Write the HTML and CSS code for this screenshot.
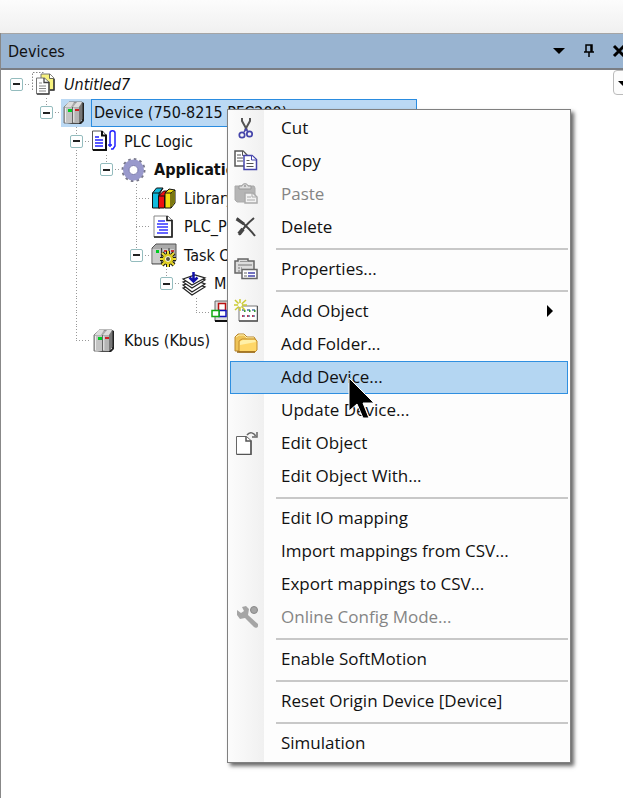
FILE: index.html
```html
<!DOCTYPE html>
<html lang="en">
<head>
  <meta charset="UTF-8">
  <meta name="viewport" content="width=device-width, initial-scale=1.0">
  <title>Devices</title>
  <link rel="stylesheet" href="styles.css">
</head>
<body>
  <!-- Shared icon shapes -->
  <svg class="defs" aria-hidden="true">
    <symbol id="plc" viewBox="0 0 26 26">
      <path d="M6 24h14l3-3V3l-2-1v19z" fill="#222"/>
      <path d="M3 7l5-5h13v17l-3 4H3z" fill="#aaa" stroke="#777"/>
      <path d="M3.500 7l4-5h5.500l-3 5zM12 7l4-5h5l-3 5z" fill="#ddd"/>
      <path d="M4 7.500h7V23H4z" fill="#c4c4c4"/>
      <path d="M12 7.500h6V23h-6z" fill="#b5b5b5"/>
      <path d="M18 7l3-4v16l-3 4z" fill="#777"/>
      <path d="M11.500 7v16" stroke="#666"/>
      <path d="M4.500 8v14M12.800 8v14" stroke="#eee"/>
      <path d="M7 9h4v3H7z" fill="#0c2"/>
      <path d="M14 9h4v2h-4z" fill="#c22"/>
    </symbol>
  </svg>

  <div class="toolbar"></div>

  <section class="panel">
    <header class="panel-header">
      <h2>Devices</h2>
      <button class="tool" aria-label="Window position">
        <svg width="14" height="8" viewBox="0 0 14 8"><path d="M1 1h12L7 7z"/></svg>
      </button>
      <button class="tool" aria-label="Auto hide">
        <svg width="12" height="16" viewBox="0 0 12 16"><path d="M3 9V2h6v7M1 9h10M6 9v5M8 2v7" fill="none" stroke="#000" stroke-width="1.500"/></svg>
      </button>
      <button class="tool" aria-label="Close">
        <svg width="14" height="14" viewBox="0 0 14 14"><path d="M2 2l10 10M12 2L2 12" stroke="#000" stroke-width="3"/></svg>
      </button>
    </header>

    <div class="panel-body">
      <ul class="tree">
        <li class="row">
          <span class="cell branch"><button class="expander" aria-label="Collapse"></button></span>
          <svg class="icon" viewBox="0 0 26 26">
            <path d="M1.500 19V1.500h11" fill="none" stroke="#888" stroke-dasharray="1.500 1.500"/>
            <path d="M10 3h9l4 4v12H10z" fill="#f7f27e" stroke="#777"/>
            <path d="M18.500 3v4.500H23" fill="#fff" stroke="#665"/>
            <path d="M23 8v11h-4" fill="none" stroke="#333" stroke-width="1.500"/>
            <path d="M5.500 7h8l4.500 4v12H5.500z" fill="#fff" stroke="#777"/>
            <path d="M13 7v4.500h5v11.500H6" fill="none" stroke="#444" stroke-width="1.300"/>
            <path d="M8 12h3M8 15h7M8 17.500h7M8 20h7" stroke="#888"/>
          </svg>
          <span class="label"><em>Untitled7</em></span>
        </li>
        <li class="row">
          <span class="cell"></span>
          <span class="cell up branch"><button class="expander" aria-label="Collapse"></button></span>
          <svg class="icon selected-icon"><use href="#plc"/></svg>
          <span class="label selected">Device (750-8215 PFC200)</span>
        </li>
        <li class="row">
          <span class="cell"></span><span class="cell"></span>
          <span class="cell up down branch"><button class="expander" aria-label="Collapse"></button></span>
          <svg class="icon" viewBox="0 0 26 26">
            <path d="M1.500 3h10l3.500 4v15H1.500z" fill="#fff" stroke="#555"/>
            <path d="M11 3v4.500h4V22H2" fill="none" stroke="#111" stroke-width="2"/>
            <path d="M4 9h4M4 12h8M4 15h8M4 18h8" stroke="#22f" stroke-width="1.500"/>
            <path d="M19 17V5c0-3 5-3 5 0v13l-2 3h-2M17 17h4M19 15v4" fill="none" stroke="#22f" stroke-width="1.500"/>
          </svg>
          <span class="label">PLC Logic</span>
        </li>
        <li class="row">
          <span class="cell"></span><span class="cell"></span><span class="cell up down"></span>
          <span class="cell up branch"><button class="expander" aria-label="Collapse"></button></span>
          <svg class="icon" viewBox="0 0 26 26">
            <circle cx="12.500" cy="13" r="10.500" fill="none" stroke="#778" stroke-width="3" stroke-dasharray="2.500 2.998"/>
            <circle cx="12.500" cy="13" r="7.500" fill="none" stroke="#99c" stroke-width="6"/>
            <circle cx="12.500" cy="13" r="4.500" fill="#fff" stroke="#77a"/>
          </svg>
          <span class="label"><strong>Application</strong></span>
        </li>
        <li class="row">
          <span class="cell"></span><span class="cell"></span><span class="cell up down"></span><span class="cell"></span>
          <span class="cell up down branch"></span>
          <svg class="icon" viewBox="0 0 26 26">
            <path d="M1.500 8l4-5H12l-3 5v15H1.500z" fill="#1bd" stroke="#111"/>
            <path d="M1.500 8H8l4-5M8 8v15" fill="none" stroke="#111"/>
            <path d="M7.500 11l5-5h4l-3 5v12h-6z" fill="#e11" stroke="#111"/>
            <path d="M7.500 11h6v12" fill="none" stroke="#111"/>
            <path d="M14 8l4-4 6 1v13l-4 5h-6z" fill="#ed1" stroke="#111"/>
            <path d="M14 8h6l4-3M20 8v15" fill="none" stroke="#111"/>
            <path d="M21 8l2-2v12l-2 3z" fill="#771"/>
          </svg>
          <span class="label">Library Manager</span>
        </li>
        <li class="row">
          <span class="cell"></span><span class="cell"></span><span class="cell up down"></span><span class="cell"></span>
          <span class="cell up down branch"></span>
          <svg class="icon" viewBox="0 0 26 26">
            <path d="M3 2h14l4 4v17H3z" fill="#fff" stroke="#888"/>
            <path d="M16 2v4.500h5V23H3" fill="none" stroke="#222" stroke-width="1.700"/>
            <path d="M7 7h7M6 10h11M6 13h11M8 16h9M6 19h11" stroke="#33f" stroke-width="1.500"/>
          </svg>
          <span class="label">PLC_PRG (PRG)</span>
        </li>
        <li class="row">
          <span class="cell"></span><span class="cell"></span><span class="cell up down"></span><span class="cell"></span>
          <span class="cell up branch"><button class="expander" aria-label="Collapse"></button></span>
          <svg class="icon" viewBox="0 0 26 26">
            <path d="M1 6l4-4h20v16l-3 4H1z" fill="#aaa" stroke="#555"/>
            <path d="M1.500 7h8v14h-8zM12 7h5v10h-5zM19 7h4v10h-4z" fill="#ccc"/>
            <path d="M10.500 6v15M18 6v6" stroke="#444"/>
            <path d="M5 8h3v3H5z" fill="#0c2"/>
            <path d="M13 8h3v2h-3zM20 8h3v2h-3z" fill="#c33"/>
            <path d="M17 9v16M9 17h16M11 11l12 12M23 11L11 23" stroke="#221" stroke-width="4"/>
            <path d="M17 9v16M9 17h16M11 11l12 12M23 11L11 23" stroke="#ed3" stroke-width="2"/>
            <circle cx="17" cy="17" r="4" fill="#fff" stroke="#dc2" stroke-width="2.500"/>
            <circle cx="17" cy="17" r="2" fill="#554"/>
          </svg>
          <span class="label">Task Configuration</span>
        </li>
        <li class="row">
          <span class="cell"></span><span class="cell"></span><span class="cell up down"></span><span class="cell"></span><span class="cell"></span>
          <span class="cell up branch"><button class="expander" aria-label="Collapse"></button></span>
          <svg class="icon" viewBox="0 0 26 26">
            <g fill="#fff" stroke="#222" stroke-width="1.200">
              <path d="M2 17l14-4 8 3-13 8z"/>
              <path d="M2 14l14-4 8 3-13 8z"/>
              <path d="M2 11l14-5 8 3-13 8z"/>
              <path d="M2 8l12-4 10 3-13 7z"/>
            </g>
            <path d="M12.500 1v9M8.500 6.500l4 4 4-4" fill="none" stroke="#11a" stroke-width="2.500"/>
          </svg>
          <span class="label">MainTask</span>
        </li>
        <li class="row">
          <span class="cell"></span><span class="cell"></span><span class="cell up down"></span><span class="cell"></span><span class="cell"></span><span class="cell"></span>
          <span class="cell up branch"></span>
          <svg class="icon" viewBox="0 0 26 26">
            <path d="M4 2h20v20H4z" fill="#ddd" stroke="#666"/>
            <path d="M4 22h20" stroke="#111" stroke-width="2"/>
            <path d="M7.500 4.500h7v7h-7z" fill="#fff" stroke="#b11" stroke-width="1.500"/>
            <path d="M8 11.500h7v6H8z" fill="#fff" stroke="#11b" stroke-width="1.500"/>
            <path d="M1 11.500h7v6H1z" fill="#fff" stroke="#1a1" stroke-width="1.500"/>
          </svg>
          <span class="label">PLC_PRG</span>
        </li>
        <li class="row">
          <span class="cell"></span><span class="cell"></span>
          <span class="cell up branch"></span>
          <svg class="icon"><use href="#plc"/></svg>
          <span class="label">Kbus (Kbus)</span>
        </li>
      </ul>
      <button class="filter" aria-label="Filter">
        <svg width="12" height="8" viewBox="0 0 12 8"><path d="M0 1h12L6 7z"/></svg>
      </button>
    </div>
  </section>

  <!-- Context menu -->
  <menu class="context-menu">
    <li><button class="item">
      <svg viewBox="0 0 24 24" fill="none">
        <path d="M8 2v3l5 9M16 2v3l-5 9" stroke="#555" stroke-width="2"/>
        <circle cx="8" cy="19" r="2.700" stroke="#44a" stroke-width="1.700"/>
        <circle cx="15.500" cy="18" r="2.700" stroke="#44a" stroke-width="1.700"/>
        <path d="M10 16l2-3 2 3" stroke="#44a" stroke-width="1.500"/>
      </svg>Cut</button></li>
    <li><button class="item">
      <svg viewBox="0 0 24 24" fill="#fff">
        <path d="M1 2h8l4 4v11H1z" stroke="#555" stroke-width="1.500"/>
        <path d="M8.500 2v4.500H12M3 6h4M3 9h6M3 12h6" stroke="#555"/>
        <path d="M10 6.500h8l4.500 4v10H10z" stroke="#44a" stroke-width="1.500"/>
        <path d="M17.500 6.500V11H22" stroke="#44a"/>
        <path d="M12.500 11.500h3M12.500 14.500h7M12.500 17.500h7" stroke="#555"/>
      </svg>Copy</button></li>
    <li><button class="item" disabled>
      <svg viewBox="0 0 24 24">
        <path d="M1 4h19l1 2v14H3l-2-2z" fill="#b5b5b5" stroke="#aaa"/>
        <path d="M5 7V4h3c0-3 6-3 6 0h3v3z" fill="#ddd" stroke="#999"/>
        <circle cx="11" cy="4" r="1" fill="#999"/>
        <path d="M11 11h8l4 4v6H11z" fill="#f2f2f2" stroke="#aaa" stroke-width="1.500"/>
        <path d="M13 15h4M13 18h8M18 11v4h4" fill="none" stroke="#aaa"/>
      </svg>Paste</button></li>
    <li><button class="item">
      <svg viewBox="0 0 24 24" fill="none" stroke="#444">
        <path d="M3 3c7 6 12 10 18 18" stroke-width="2"/>
        <path d="M2.500 4L10 9" stroke-width="3"/>
        <path d="M20 3C14 8 9 13 5 20" stroke-width="2"/>
        <path d="M9 14l-4 5" stroke-width="4"/>
      </svg>Delete</button></li>
    <li class="separator"></li>
    <li><button class="item">
      <svg viewBox="0 0 24 24" fill="#ddd" stroke="#666">
        <path d="M1 4h3V2h10v2h6v12H1z" stroke-width="1.500"/>
        <path d="M6 4.500h7" stroke="#999"/>
        <path d="M4 8h14" stroke="#777"/>
        <path d="M4 11h4M4 14h3" stroke="#777" stroke-dasharray="2 1"/>
        <path d="M8 12.500h15v9H8z" fill="#fff" stroke-width="1.500"/>
        <path d="M10 16h3M10 19h3"/>
        <path d="M14 16h7M14 19h7" stroke="#44a" stroke-width="1.500"/>
      </svg>Properties...</button></li>
    <li class="separator"></li>
    <li><button class="item">
      <svg viewBox="0 0 24 24" fill="none">
        <path d="M5 7h18.500v15H5z" fill="#fff" stroke="#777"/>
        <path d="M23.500 7v15H5" stroke="#555" stroke-width="1.500"/>
        <path d="M8 11h14M8 17h14" stroke="#79b" stroke-width="2" stroke-dasharray="3 2"/>
        <path d="M10 12h12" stroke="#393" stroke-width="2" stroke-dasharray="1.500 3.500"/>
        <path d="M8 17h12" stroke="#b35" stroke-width="2" stroke-dasharray="1.500 3.500"/>
        <path d="M6 0v12M0 6h13M1 1l10 10M12 1L1 11" stroke="#cc3" stroke-width="1.500"/>
        <circle cx="6" cy="6" r="2" fill="#fff"/>
      </svg>Add Object
      <svg class="arrow" viewBox="0 0 6 12"><path d="M0 0l6 6-6 6z"/></svg></button></li>
    <li><button class="item">
      <svg viewBox="0 0 24 24">
        <path d="M1 19V5l3-3h6l3 3h7l2 3v11z" fill="#efc458" stroke="#b8862c"/>
        <path d="M2 5l3-2h5l3 3h7" fill="none" stroke="#fff1b0"/>
        <path d="M5 20V9l3-2h13l2 2v9l-2 2z" fill="#ffd768" stroke="#c18d2c"/>
        <path d="M6 9.500L9 8h12l1 2-16 3z" fill="#fff0a8"/>
        <path d="M3 20h18" stroke="#946514" stroke-width="1.500"/>
      </svg>Add Folder...</button></li>
    <li><button class="item active"><svg viewBox="0 0 24 24"></svg>Add Device...</button></li>
    <li><button class="item"><svg viewBox="0 0 24 24"></svg>Update Device...</button></li>
    <li><button class="item">
      <svg viewBox="0 0 24 24" fill="none" stroke="#666">
        <path d="M2.500 5.500h10l4.500 4v14H2.500z" fill="#fff"/>
        <path d="M12 5.500V10h5v13.500H3" stroke="#555" stroke-width="1.500"/>
        <path d="M13 4c3-4 7-2 8.500 1M23 1v5h-5" stroke-width="1.500"/>
      </svg>Edit Object</button></li>
    <li><button class="item"><svg viewBox="0 0 24 24"></svg>Edit Object With...</button></li>
    <li class="separator"></li>
    <li><button class="item"><svg viewBox="0 0 24 24"></svg>Edit IO mapping</button></li>
    <li><button class="item"><svg viewBox="0 0 24 24"></svg>Import mappings from CSV...</button></li>
    <li><button class="item"><svg viewBox="0 0 24 24"></svg>Export mappings to CSV...</button></li>
    <li><button class="item" disabled>
      <svg viewBox="0 0 24 24" fill="#a5a5a5">
        <path d="M3 5l4 3 3-2-2-4 4-1 3 3-1 6 10 9c1 3-2 5-4 3L11 13l-5 1-3-4z"/>
        <circle cx="20" cy="5" r="3.500" stroke="#888"/>
      </svg>Online Config Mode...</button></li>
    <li class="separator"></li>
    <li><button class="item"><svg viewBox="0 0 24 24"></svg>Enable SoftMotion</button></li>
    <li class="separator"></li>
    <li><button class="item"><svg viewBox="0 0 24 24"></svg>Reset Origin Device [Device]</button></li>
    <li class="separator"></li>
    <li><button class="item"><svg viewBox="0 0 24 24"></svg>Simulation</button></li>
  </menu>

  <!-- Mouse pointer -->
  <svg class="pointer" width="28" height="44" viewBox="0 0 28 44">
    <path d="M1 1v33l8-7 6 14h6l-6-15h11z" stroke="#fff"/>
  </svg>
</body>
</html>
```

FILE: styles.css
```css
* {
  box-sizing: border-box;
}

body {
  margin: 0;
  min-height: 100vh;
  display: flex;
  flex-direction: column;
  overflow: hidden;
  background: #fff;
  color: #111;
  font-family: "DejaVu Sans Condensed", "DejaVu Sans", sans-serif;
  font-stretch: condensed;
  font-size: 16px;
}

button {
  margin: 0;
  padding: 0;
  border: 0;
  background: none;
  color: inherit;
  font: inherit;
}

.defs {
  position: absolute;
  width: 0;
  height: 0;
}

.toolbar {
  height: 33px;
  background: linear-gradient(#fcfcfc, #f0f0f0);
}

/* Devices panel, runs off the right edge */
.panel {
  flex: 1;
  display: flex;
  flex-direction: column;
  margin-right: -11px;
  border-left: 1px solid #888;
}

.panel-header {
  display: flex;
  align-items: center;
  height: 37px;
  padding-left: 7px;
  border-top: 1px solid #a5a5a5;
  border-bottom: 2px solid #7a7e84;
  background: #99b4d1;
}

.panel-header h2 {
  flex: 1;
  margin: 0;
  font-size: 16px;
  font-weight: normal;
}

.tool {
  display: flex;
  align-items: center;
  justify-content: center;
  width: 30px;
  height: 30px;
}

.panel-body {
  flex: 1;
  display: flex;
  align-items: flex-start;
}

.filter {
  width: 21px;
  height: 25px;
  border: 1px solid #bbb;
  border-radius: 4px;
  background: #fcfcfc;
}

/* Tree */
.tree {
  flex: 1;
  margin: 0;
  padding: 0;
  list-style: none;
}

.row {
  display: flex;
  align-items: center;
  height: 28px;
  white-space: nowrap;
}

.row:nth-child(even) {
  height: 29px;
}

.cell {
  --dots-y: repeating-linear-gradient(#999 0 1px, transparent 1px 3px);
  --dots-x: repeating-linear-gradient(90deg, #999 0 1px, transparent 1px 3px);
  --up: 0;
  --down: 0;
  --branch: 0;
  flex: none;
  display: flex;
  align-items: center;
  justify-content: center;
  width: 30px;
  height: 100%;
  background-image: var(--dots-y), var(--dots-y), var(--dots-x);
  background-repeat: no-repeat;
  background-position: 15px top, 15px bottom, right center;
  background-size: var(--up) 50%, var(--down) 50%, var(--branch) 1px;
}

.up {
  --up: 1px;
}

.down {
  --down: 1px;
}

.branch {
  --branch: 15px;
}

.expander {
  width: 13px;
  height: 13px;
  border: 1px solid #94bcbe;
  border-radius: 2px;
  background: linear-gradient(#222, #222) center / 7px 2px no-repeat, #fff;
}

.icon {
  flex: none;
  width: 30px;
  height: 26px;
  padding-right: 4px;
}

.label {
  padding: 0 3px;
}

.selected-icon {
  height: 28px;
  background: #bbd9f4;
}

.selected {
  flex: 0 1 326px;
  height: 28px;
  line-height: 26px;
  border: 1px solid #2a8ce0;
  padding: 0 2px;
  background: #bbd9f4;
}

/* Context menu */
.context-menu {
  position: absolute;
  left: 227px;
  top: 109px;
  width: 344px;
  margin: 0;
  padding: 2px;
  list-style: none;
  border: 1px solid #808080;
  background: linear-gradient(90deg, #fcfcfc, #f0f0f0) left / 36px 100% no-repeat, #fdfdfd;
  box-shadow: 3px 3px 4px rgba(0, 0, 0, 0.6);
  font-family: "Open Sans", "Noto Sans", sans-serif;
  font-stretch: normal;
  font-size: 17px;
}

.item {
  display: flex;
  align-items: center;
  width: 100%;
  height: 33px;
  padding: 0 14px 2px 3px;
  border: 1px solid transparent;
  text-align: left;
  white-space: nowrap;
}

.item svg {
  flex: none;
  width: 24px;
  height: 24px;
  margin-right: 23px;
}

.item .arrow {
  width: 6px;
  height: 12px;
  margin: 0 0 0 auto;
}

.item:disabled {
  color: #858585;
}

.item.active {
  border-color: #2f8fe0;
  background: #b4d6f2;
}

.separator {
  height: 2px;
  margin: 4px 0 3px 46px;
  background: #c8c8c8;
}

.pointer {
  position: absolute;
  left: 348px;
  top: 377px;
}
```
